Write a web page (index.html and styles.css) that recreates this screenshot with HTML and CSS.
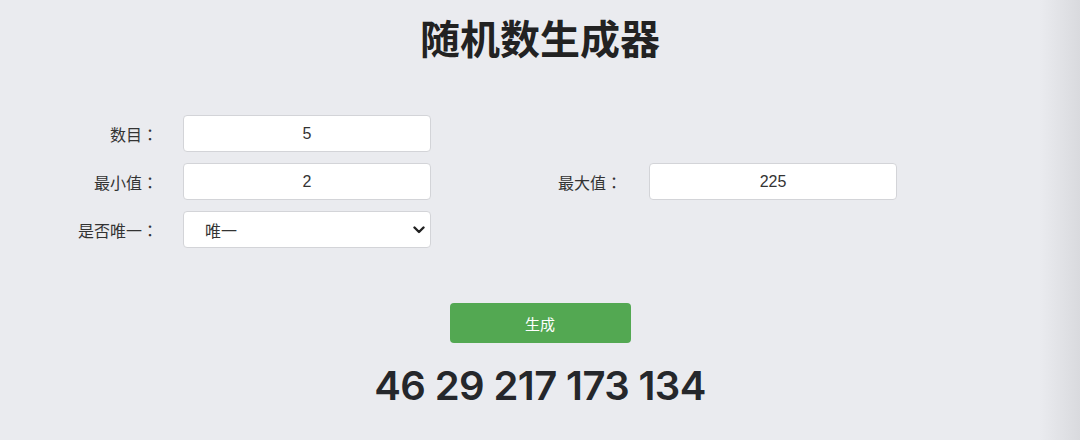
FILE: index.html
```html
<!DOCTYPE html>
<html lang="zh-CN">
<head>
  <meta charset="UTF-8">
  <title>随机数生成器</title>
  <link rel="stylesheet" href="styles.css">
</head>
<body>

<h1>随机数生成器</h1>

<form class="form" onsubmit="return false;">
  <label class="lbl" for="count">数目<span class="colon">：</span></label>
  <input class="field" type="text" id="count" value="5">
  <span></span><span></span>

  <label class="lbl" for="min">最小值<span class="colon">：</span></label>
  <input class="field" type="text" id="min" value="2">
  <label class="lbl lbl-right" for="max">最大值<span class="colon">：</span></label>
  <input class="field" type="text" id="max" value="225">

  <label class="lbl" for="unique">是否唯一<span class="colon">：</span></label>
  <div class="select-wrap">
    <select class="field select" id="unique">
      <option>唯一</option>
      <option>不唯一</option>
    </select>
    <svg class="chev" width="12" height="8" viewBox="0 0 12 8"><path d="M1.5 1.5 L6 6 L10.5 1.5" fill="none" stroke="#222" stroke-width="2.4" stroke-linecap="round" stroke-linejoin="round"/></svg>
  </div>
</form>

<div class="actions">
  <button class="btn" type="button">生成</button>
</div>

<p class="result">46 29 217 173 134</p>

</body>
</html>
```

FILE: styles.css
```css
html { background: linear-gradient(to right, #eaebef calc(100% - 40px), #d9dade); min-height: 100%; }
body { margin: 0; font-family: "Noto Sans CJK SC", "Liberation Sans", sans-serif; color: #333; }
h1 { margin: 13px 0 0; font-size: 40px; line-height: 48px; font-weight: 700; text-align: center; color: #222; }
.form { display: grid; grid-template-columns: 183px 248px 218px 248px; grid-auto-rows: 37px; row-gap: 11px; margin-top: 54px; }
.lbl { display: flex; align-items: center; justify-content: flex-end; padding-right: 25px; font-size: 16px; color: #333; }
.lbl-right { padding-right: 27px; }
.colon { font-family: "Noto Sans CJK TC", sans-serif; }
.field { box-sizing: border-box; width: 100%; height: 37px; border: 1px solid #d3d4d8; border-radius: 4px; background: #fff; font-family: "Liberation Sans", "Noto Sans CJK SC", sans-serif; font-size: 16px; color: #333; text-align: center; outline: none; }
.select-wrap { position: relative; }
.select { appearance: none; -webkit-appearance: none; text-align: left; padding-left: 21px; font-family: "Noto Sans CJK SC", sans-serif; }
.chev { position: absolute; right: 6px; top: 15px; pointer-events: none; }
.actions { display: flex; justify-content: center; margin-top: 55px; }
.btn { width: 181px; height: 40px; border: none; border-radius: 4px; background: #53a852; color: #fff; font-family: "Noto Sans CJK SC", sans-serif; font-size: 15px; }
.result { margin: 19px 0 0; font-family: Inter, "Liberation Sans", sans-serif; font-size: 40px; line-height: 48px; font-weight: 600; letter-spacing: -0.6px; text-align: center; color: #25272b; }
```
